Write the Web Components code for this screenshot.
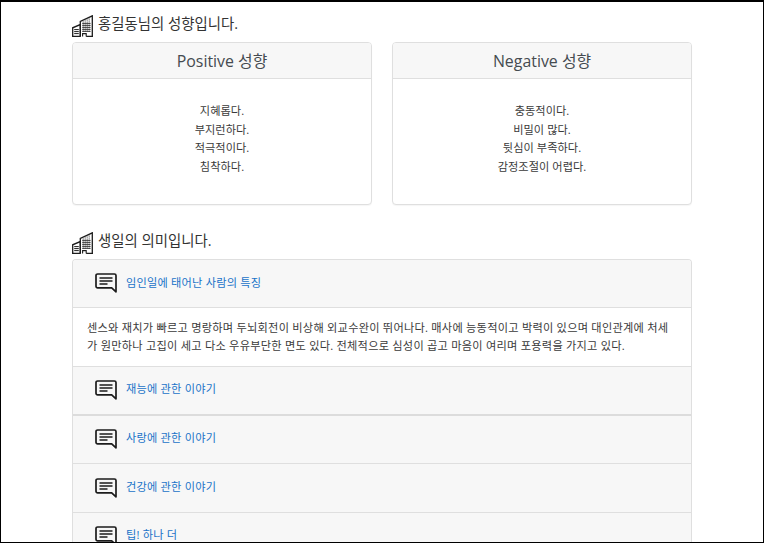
<!DOCTYPE html>
<html lang="ko"><head><meta charset="utf-8">
<style>
html,body{margin:0;padding:0;background:#fff}
body{font-family:"Open Sans","Noto Sans CJK KR",sans-serif;color:#212529;font-size:12px}
</style></head><body>
<x-page>
  <x-title>홍길동님의 성향입니다.</x-title>
  <x-cards>
    <x-card heading="Positive 성향"><div>지혜롭다.</div><div>부지런하다.</div><div>적극적이다.</div><div>침착하다.</div></x-card>
    <x-card heading="Negative 성향"><div>충동적이다.</div><div>비밀이 많다.</div><div>뒷심이 부족하다.</div><div>감정조절이 어렵다.</div></x-card>
  </x-cards>
  <x-title second>생일의 의미입니다.</x-title>
  <x-accordion>
    <x-acc-head h="48" first>임인일에 태어난 사람의 특징</x-acc-head>
    <x-acc-body>센스와 재치가 빠르고 명랑하며 두뇌회전이 비상해 외교수완이 뛰어나다. 매사에 능동적이고 박력이 있으며 대인관계에 처세가 원만하나 고집이 세고 다소 우유부단한 면도 있다. 전체적으로 심성이 곱고 마음이 여리며 포용력을 가지고 있다.</x-acc-body>
    <x-acc-head h="49" heavy>재능에 관한 이야기</x-acc-head>
    <x-acc-head h="48">사랑에 관한 이야기</x-acc-head>
    <x-acc-head h="49">건강에 관한 이야기</x-acc-head>
    <x-acc-head h="48">팁! 하나 더</x-acc-head>
  </x-accordion>
</x-page>
<script>
const def=(name,html,attrs)=>customElements.define(name,class extends HTMLElement{
  connectedCallback(){
    if(this.shadowRoot)return;
    const r=this.attachShadow({mode:'open'});
    r.innerHTML=html;
    if(attrs)attrs(this,r);
  }
});
const building=`<svg width="21" height="22" viewBox="0 0 21 22" fill="none" stroke="#1c1c1c" stroke-width="1.3">
<path d="M.7 21.3V12.8L8.3 9.6V21.3" />
<path d="M8.3 21.3V6.4L20.3 .8V21.3"/>
<path d="M0 21.4H8.8M14.2 21.4H21" stroke-width="1.3"/>
<path d="M10.6 21.4V18.6H14.2V21.4" stroke-width="1.1"/>
<path d="M10.2 8.4H18.6M10.2 10.4H18.6M10.2 12.4H18.6M10.2 14.4H18.6M10.2 16.4H18.6" stroke-width=".8"/>
<path d="M11.2 6.5V17M13.2 5.5V17M15.2 4.6V17M17.2 3.6V17" stroke-width=".9" stroke-dasharray="1 1"/>
<path d="M2.2 14.6H6.8M2.2 16.6H6.8M2.2 18.6H6.8" stroke-width="1"/>
</svg>`;
const chat=`<svg width="22" height="20" viewBox="0 0 22 20" fill="none" stroke="#1c1c1c">
<path d="M2.6 1H19.4A1.6 1.6 0 0 1 21 2.6V18.8L16.7 14.8H2.6A1.6 1.6 0 0 1 1 13.2V2.6A1.6 1.6 0 0 1 2.6 1Z" stroke-width="1.7" stroke-linejoin="round"/>
<path d="M4.5 4.9H17.5M4.5 7.9H17.5M4.5 10.9H12.5" stroke-width="1.5"/>
</svg>`;
def('x-page',`<style>
:host{display:block;box-sizing:border-box;width:764px;height:543px;border:solid #000;border-width:2px 1px 1px 1px;overflow:hidden;background:#fff}
.in{padding:0 71px;width:620px;box-sizing:content-box}
</style><div class="in"><slot></slot></div>`);
def('x-title',`<style>
:host{display:flex;align-items:flex-start;gap:5px;height:40px;box-sizing:border-box;padding-top:13px;font-size:14.4px;color:#333}
:host([second]){height:54px;padding-top:27px}
.t{line-height:18px}
svg{display:block}
</style>${building}<span class="t"><slot></slot></span>`);
def('x-cards',`<style>
:host{display:grid;grid-template-columns:300px 300px;gap:20px;width:620px}
</style><slot></slot>`);
def('x-card',`<style>
:host{display:block;box-sizing:border-box;height:163px;border:1px solid #dfdfdf;border-radius:4px;overflow:hidden;background:#fff;box-shadow:0 1px 1px rgba(0,0,0,.04)}
.h{height:36px;box-sizing:border-box;background:#f7f7f7;border-bottom:1px solid #dfdfdf;display:flex;align-items:center;justify-content:center;font-size:15.9px;color:#454b50}
.b{padding-top:23px;text-align:center;font-size:11.2px;line-height:18.6px;letter-spacing:.05px;color:#3a3a3a}
</style><div class="h"></div><div class="b"><slot></slot></div>`,(el,r)=>{r.querySelector('.h').textContent=el.getAttribute('heading')});
def('x-accordion',`<style>
:host{display:block;width:620px;box-sizing:border-box;border:1px solid #dfdfdf;border-bottom:0;border-radius:4px 4px 0 0;overflow:hidden}
</style><slot></slot>`);
def('x-acc-head',`<style>
:host{display:flex;align-items:center;box-sizing:border-box;height:48px;padding-left:22px;padding-bottom:1px;gap:9px;background:#f7f7f7;border-bottom:1px solid #dfdfdf;font-size:11.2px;letter-spacing:.2px;color:#1a73c8}
:host([heavy]){border-bottom:2px solid #dcdcdc}
svg{display:block;flex:none}
span{margin-bottom:4px}
:host([first]) span{margin-bottom:2px}
</style>${chat}<span><slot></slot></span>`,(el)=>{el.style.height=el.getAttribute('h')+'px'});
def('x-acc-body',`<style>
:host{display:block;box-sizing:border-box;height:59px;padding:11px 14px 0;background:#fff;font-size:11.2px;line-height:17.5px;letter-spacing:.24px;color:#3a3a3a;word-break:break-all;border-bottom:1px solid #dfdfdf}
</style><slot></slot>`);
</script>
</body></html>
